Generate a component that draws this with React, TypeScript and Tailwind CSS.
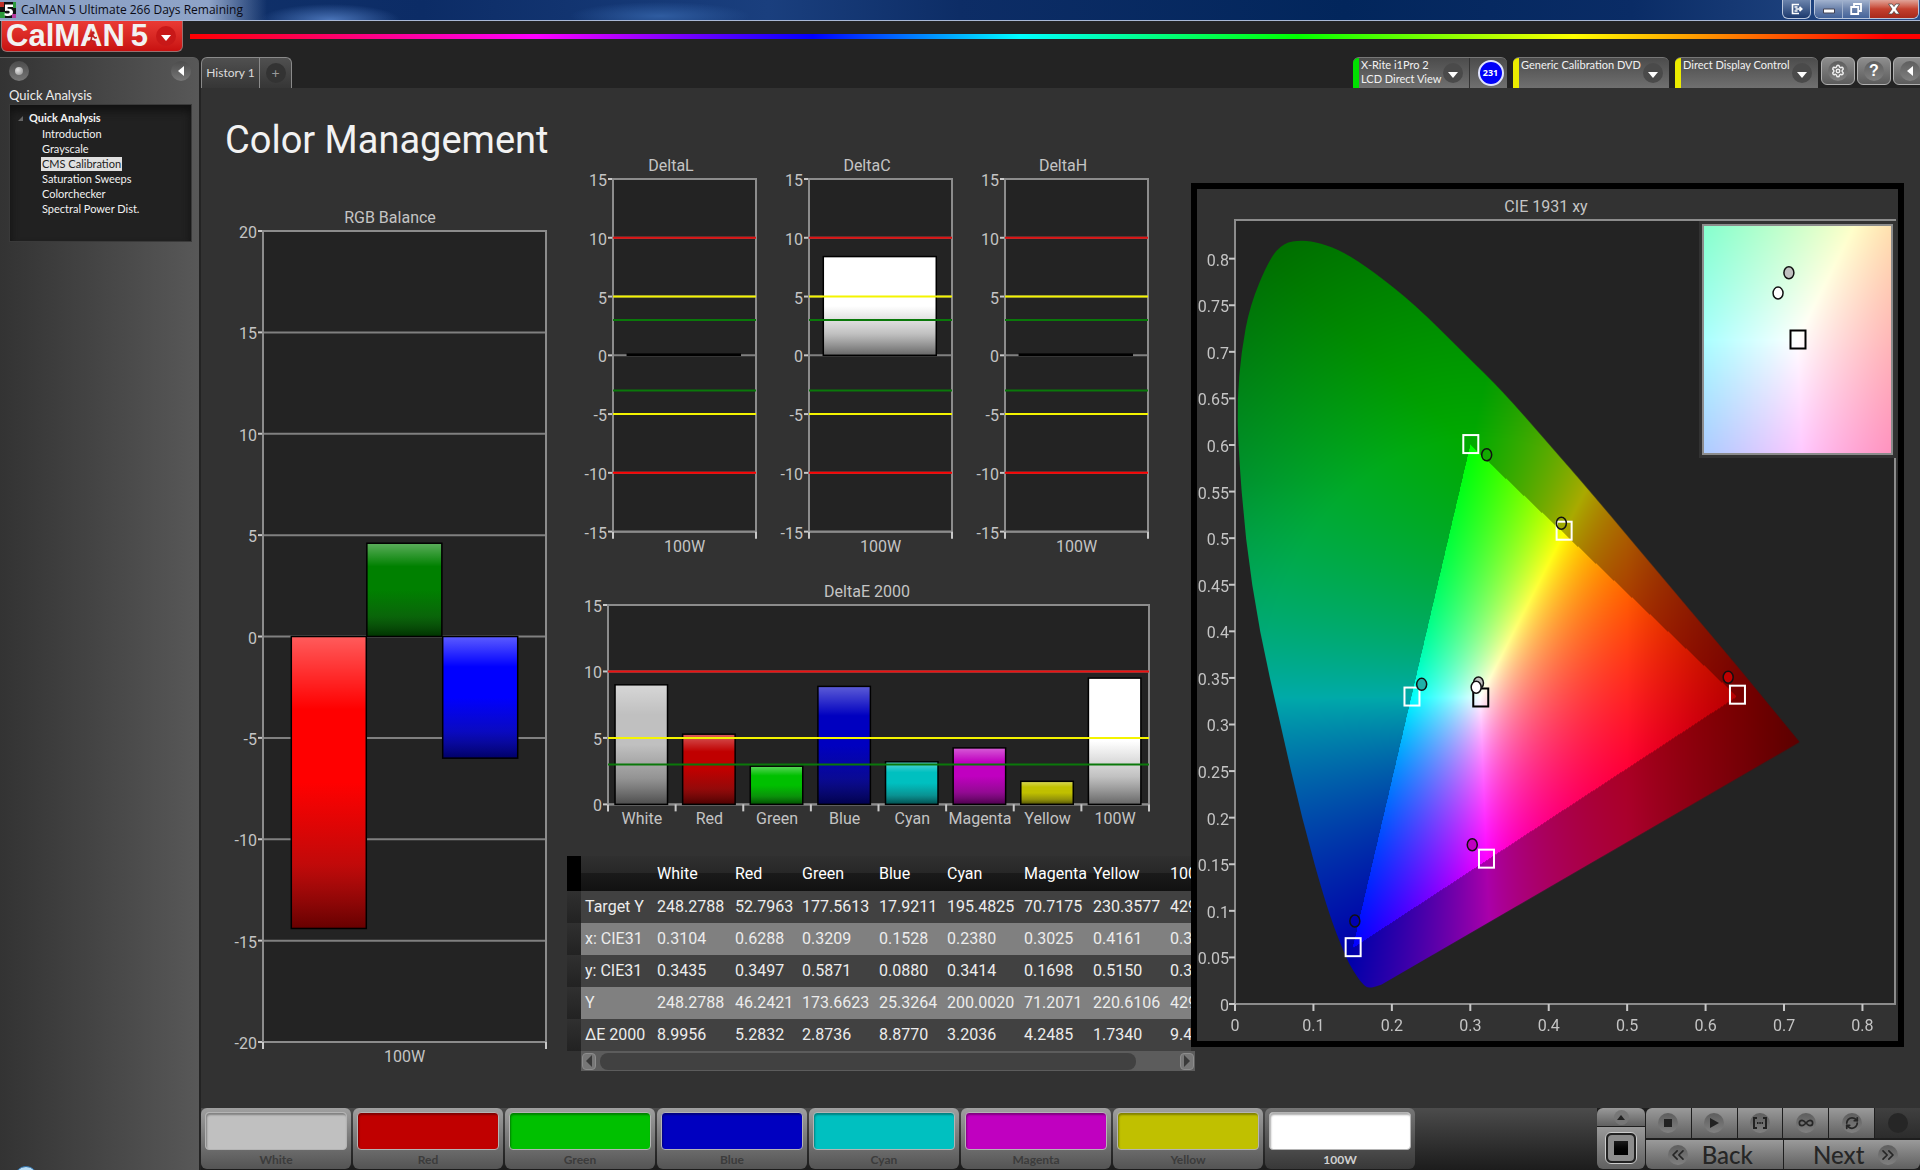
import { useEffect, useRef, type ReactNode } from "react";
import {
  ChevronsLeft,
  ChevronsRight,
  Infinity as InfinityIcon,
  RefreshCw,
  Settings,
} from "lucide-react";

const DATA_FONT = "font-['Roboto',sans-serif]";
const UI = "font-['Lato',sans-serif]";

/* ---------- charts ---------- */

type Bar = { value: number; color: string; x: number; width: number };
type RefLine = { value: number; color: string };

type BarChartProps = {
  title: string;
  min: number;
  max: number;
  step: number;
  bars: Bar[];
  lines: RefLine[];
  labels: string[];
  plotClass: string;
  labelClass: string;
};

function BarChart({ title, min, max, step, bars, lines, labels, plotClass, labelClass }: BarChartProps) {
  const pos = (v: number) => ((max - v) / (max - min)) * 100;
  const ticks: number[] = [];
  for (let v = max; v >= min; v -= step) ticks.push(v);
  const gloss = `gloss-${title.replace(/ /g, "-")}`;
  return (
    <>
      <h2 className="mb-[3px] text-center text-base/5 text-[#c4c4c4]">{title}</h2>
      <svg className={`min-h-0 overflow-visible ${plotClass}`} role="img" aria-label={title}>
        <defs>
          <linearGradient id={gloss} x1="0" y1="0" x2="0" y2="1">
            <stop offset="0" stopColor="#fff" stopOpacity="0.36" />
            <stop offset="0.25" stopColor="#fff" stopOpacity="0" />
            <stop offset="0.5" stopColor="#222" stopOpacity="0" />
            <stop offset="0.78" stopColor="#222" stopOpacity="0.28" />
            <stop offset="1" stopColor="#000" stopOpacity="0.6" />
          </linearGradient>
        </defs>
        <rect width="100%" height="100%" fill="#232323" />
        {ticks.map((v) => (
          <g key={v}>
            <line x1="-5" x2="0" y1={`${pos(v)}%`} y2={`${pos(v)}%`} stroke="#c8c8c8" strokeWidth="2" />
            <line x1="0" x2="100%" y1={`${pos(v)}%`} y2={`${pos(v)}%`} stroke="#808080" strokeWidth="2" />
            <text x="-6" y={`${pos(v)}%`} dy="7" textAnchor="end" fill="#c4c4c4" fontSize="16">
              {v}
            </text>
          </g>
        ))}
        <rect width="100%" height="100%" fill="none" stroke="#8c8c8c" strokeWidth="2" />
        {bars.map((b) => {
          const top = Math.min(pos(b.value), pos(0));
          const height = Math.abs(pos(b.value) - pos(0));
          const box = { x: `${b.x}%`, y: `${top}%`, width: `${b.width}%`, height: `${height}%` };
          return (
            <g key={b.x}>
              <rect {...box} fill={b.color} />
              <rect {...box} fill={`url(#${gloss})`} stroke="#000" strokeWidth="1.5" />
            </g>
          );
        })}
        {lines.map((l) => (
          <line
            key={l.value}
            x1="0"
            x2="100%"
            y1={`${pos(l.value)}%`}
            y2={`${pos(l.value)}%`}
            stroke={l.color}
            strokeWidth="2"
          />
        ))}
        <svg y="100%" overflow="visible">
          {[...labels, ""].map((l, i) => (
            <line
              key={l}
              x1={`${(i * 100) / labels.length}%`}
              x2={`${(i * 100) / labels.length}%`}
              y1="0"
              y2="7"
              stroke="#c8c8c8"
              strokeWidth="2"
            />
          ))}
        </svg>
      </svg>
      <div className={`mt-[5px] flex text-base/5 text-[#c4c4c4] ${labelClass}`}>
        {labels.map((l) => (
          <span key={l} className="w-0 flex-1 text-center whitespace-nowrap">
            {l}
          </span>
        ))}
      </div>
    </>
  );
}

const DELTA_LINES: RefLine[] = [
  { value: 10, color: "#e01010" },
  { value: 5, color: "#f4f400" },
  { value: 3, color: "#0a780a" },
  { value: -3, color: "#0a780a" },
  { value: -5, color: "#f4f400" },
  { value: -10, color: "#ff0000" },
];

const PATCHES = [
  { name: "White", color: "#c0c0c0", swatch: "bg-[#c0c0c0]", deltaE: 8.9956 },
  { name: "Red", color: "#c00000", swatch: "bg-[#c00000]", deltaE: 5.2832 },
  { name: "Green", color: "#00c000", swatch: "bg-[#00c000]", deltaE: 2.8736 },
  { name: "Blue", color: "#0000c0", swatch: "bg-[#0000c0]", deltaE: 8.877 },
  { name: "Cyan", color: "#00c0c0", swatch: "bg-[#00c0c0]", deltaE: 3.2036 },
  { name: "Magenta", color: "#c000c0", swatch: "bg-[#c000c0]", deltaE: 4.2485 },
  { name: "Yellow", color: "#c0c000", swatch: "bg-[#c0c000]", deltaE: 1.734 },
  { name: "100W", color: "#ffffff", swatch: "bg-white", deltaE: 9.5 },
];

/* ---------- chromaticity diagram ---------- */

const LOCUS: [number, number][] = [
  [0.187, 0.021], [0.172, 0.016], [0.163, 0.021], [0.151, 0.035], [0.142, 0.049], [0.118, 0.1],
  [0.085, 0.2], [0.058, 0.3], [0.031, 0.4], [0.013, 0.5], [0.004, 0.6], [0.003, 0.65], [0.008, 0.7],
  [0.019, 0.75], [0.044, 0.8], [0.062, 0.817], [0.085, 0.82], [0.109, 0.817], [0.139, 0.807],
  [0.175, 0.787], [0.228, 0.752], [0.294, 0.697], [0.342, 0.657], [0.393, 0.608], [0.456, 0.547],
  [0.533, 0.47], [0.588, 0.415], [0.641, 0.362], [0.72, 0.281],
];
const PRIMARIES: [number, number][] = [[0.64, 0.33], [0.3, 0.6], [0.15, 0.06]];

function chromaColor(x: number, y: number): [number, number, number] {
  const X = x / y;
  const Z = (1 - x - y) / y;
  const lin = [
    3.2406 * X - 1.5372 - 0.4986 * Z,
    -0.9689 * X + 1.8758 + 0.0415 * Z,
    0.0557 * X - 0.204 + 1.057 * Z,
  ].map((c) => Math.max(0, c));
  const peak = Math.max(...lin);
  return lin.map((c) => (255 * c) / peak) as [number, number, number];
}

function insideGamut(x: number, y: number) {
  return PRIMARIES.every(([ax, ay], i) => {
    const [bx, by] = PRIMARIES[(i + 1) % 3];
    return (bx - ax) * (y - ay) - (by - ay) * (x - ax) >= 0;
  });
}

function falloff(x: number, y: number) {
  const d = Math.hypot(x - 0.3127, y - 0.329);
  const upper = Math.min(1, Math.max(0, (y - 0.36) / 0.2)) * Math.min(1, Math.max(0, (0.5 - x) / 0.15));
  return 1 - 2.1 * Math.max(0, x - 0.5) - 1.3 * upper * Math.max(0, d - 0.28);
}

type Range = { x0: number; x1: number; y0: number; y1: number };

function ChromaField({ range, full }: { range: Range; full: boolean }) {
  const ref = useRef<HTMLCanvasElement>(null);
  useEffect(() => {
    const canvas = ref.current;
    const ctx = canvas?.getContext("2d");
    if (!canvas || !ctx) return;
    const { width: w, height: h } = canvas;
    const image = ctx.createImageData(w, h);
    for (let j = 0; j < h; j++) {
      const y = range.y1 - ((j + 0.5) / h) * (range.y1 - range.y0);
      for (let i = 0; i < w; i++) {
        const x = range.x0 + ((i + 0.5) / w) * (range.x1 - range.x0);
        const k = full ? falloff(x, y) * (insideGamut(x, y) ? 1 : 0.665) : 1;
        const [r, g, b] = chromaColor(x, y);
        image.data.set([r * k, g * k, b * k, 255], (j * w + i) * 4);
      }
    }
    ctx.putImageData(image, 0, 0);
    if (!full) return;
    const pts = LOCUS.map(([x, y]) => [
      ((x - range.x0) / (range.x1 - range.x0)) * w,
      ((range.y1 - y) / (range.y1 - range.y0)) * h,
    ]);
    ctx.globalCompositeOperation = "destination-in";
    ctx.beginPath();
    ctx.moveTo(pts[0][0], pts[0][1]);
    for (let n = 1; n < pts.length - 1; n++) {
      ctx.quadraticCurveTo(
        pts[n][0],
        pts[n][1],
        (pts[n][0] + pts[n + 1][0]) / 2,
        (pts[n][1] + pts[n + 1][1]) / 2,
      );
    }
    ctx.lineTo(pts[pts.length - 1][0], pts[pts.length - 1][1]);
    ctx.closePath();
    ctx.fill();
  }, [range, full]);
  return (
    <canvas
      ref={ref}
      width={full ? 660 : 188}
      height={full ? 785 : 229}
      className="absolute inset-0 h-full w-full"
    />
  );
}

const CIE_RANGE: Range = { x0: 0, x1: 0.8415, y0: 0, y1: 0.8415 };
const INSET_RANGE: Range = { x0: 0.2877, x1: 0.3377, y0: 0.304, y1: 0.354 };

type Mark = { x: number; y: number; color: string };
const TARGETS: Mark[] = [
  { x: 0.3, y: 0.601, color: "#fff" },
  { x: 0.419, y: 0.508, color: "#fff" },
  { x: 0.64, y: 0.332, color: "#fff" },
  { x: 0.225, y: 0.33, color: "#fff" },
  { x: 0.32, y: 0.156, color: "#fff" },
  { x: 0.15, y: 0.061, color: "#fff" },
  { x: 0.3127, y: 0.329, color: "#000" },
];
const MEASURED: Mark[] = [
  { x: 0.3209, y: 0.5885, color: "none" },
  { x: 0.4161, y: 0.515, color: "none" },
  { x: 0.6288, y: 0.3497, color: "#c00000" },
  { x: 0.238, y: 0.342, color: "#20b0a8" },
  { x: 0.3025, y: 0.1698, color: "#c000c0" },
  { x: 0.1528, y: 0.088, color: "#0000b0" },
  { x: 0.3104, y: 0.3435, color: "#c0c0c0" },
  { x: 0.3075, y: 0.339, color: "#fff" },
];

function Marks({ range, targets, measured }: { range: Range; targets: Mark[]; measured: Mark[] }) {
  const px = (x: number) => `${((x - range.x0) / (range.x1 - range.x0)) * 100}%`;
  const py = (y: number) => `${((range.y1 - y) / (range.y1 - range.y0)) * 100}%`;
  return (
    <>
      {targets.map((t) => (
        <svg key={t.x} x={px(t.x)} y={py(t.y)} overflow="visible">
          <rect x="-7" y="-9" width="15" height="18" fill="none" stroke={t.color} strokeWidth="2" />
        </svg>
      ))}
      {measured.map((m) => (
        <svg key={m.x} x={px(m.x)} y={py(m.y)} overflow="visible">
          <ellipse cx="0" cy="-1" rx="5" ry="6" fill={m.color} stroke="#111" strokeWidth="1.5" />
        </svg>
      ))}
    </>
  );
}

function CieChart() {
  const yTicks = Array.from({ length: 17 }, (_, i) => i * 0.05);
  const xTicks = Array.from({ length: 9 }, (_, i) => i * 0.1);
  const label = (v: number) => String(Math.round(v * 100) / 100);
  return (
    <section className="mt-[95px] mb-[61px] flex flex-col border-[6px] border-black pt-2 pr-[3px] pb-[37px] pl-[38px]">
      <h2 className="mb-[3px] -ml-[38px] text-center text-base/5 text-[#c4c4c4]">CIE 1931 xy</h2>
      <div className="relative flex-1 bg-[#232323]">
        <ChromaField range={CIE_RANGE} full />
        <svg className="absolute inset-0 h-full w-full overflow-visible" role="img" aria-label="CIE 1931 xy chromaticity diagram">
          <rect width="100%" height="100%" fill="none" stroke="#8c8c8c" strokeWidth="2" />
          {yTicks.map((v) => (
            <svg key={v} y={`${(1 - v / CIE_RANGE.y1) * 100}%`} overflow="visible">
              <line x1="-6" x2="0" stroke="#c8c8c8" strokeWidth="2" />
              <text x="-6" y="7" textAnchor="end" fill="#c4c4c4" fontSize="16">
                {label(v)}
              </text>
            </svg>
          ))}
          {xTicks.map((v) => (
            <svg key={v} x={`${(v / CIE_RANGE.x1) * 100}%`} y="100%" overflow="visible">
              <line y1="0" y2="7" stroke="#c8c8c8" strokeWidth="2" />
              <text x="0" y="27" textAnchor="middle" fill="#c4c4c4" fontSize="16">
                {label(v)}
              </text>
            </svg>
          ))}
          <Marks range={CIE_RANGE} targets={TARGETS} measured={MEASURED} />
        </svg>
        <div className="absolute top-px -right-[3px] h-[237px] w-[199px] bg-[#323232] p-[3px] pr-[5px]">
          <div className="relative h-full w-full border-2 border-[#8c8c8c]">
            <ChromaField range={INSET_RANGE} full={false} />
            <svg className="absolute inset-0 h-full w-full" aria-hidden="true">
              <Marks range={INSET_RANGE} targets={[TARGETS[6]]} measured={MEASURED.slice(6)} />
            </svg>
          </div>
        </div>
      </div>
    </section>
  );
}

/* ---------- table ---------- */

const HEAD = ["White", "Red", "Green", "Blue", "Cyan", "Magenta", "Yellow", "100W"];
const ROWS: [string, string[]][] = [
  ["Target Y", ["248.2788", "52.7963", "177.5613", "17.9211", "195.4825", "70.7175", "230.3577", "429.6314"]],
  ["x: CIE31", ["0.3104", "0.6288", "0.3209", "0.1528", "0.2380", "0.3025", "0.4161", "0.3077"]],
  ["y: CIE31", ["0.3435", "0.3497", "0.5871", "0.0880", "0.3414", "0.1698", "0.5150", "0.3400"]],
  ["Y", ["248.2788", "46.2421", "173.6623", "25.3264", "200.0020", "71.2071", "220.6106", "429.6314"]],
  ["ΔE 2000", ["8.9956", "5.2832", "2.8736", "8.8770", "3.2036", "4.2485", "1.7340", "9.4821"]],
];

function ResultsTable() {
  return (
    <div className="mt-[27px] ml-[7px]">
      <div className="overflow-hidden">
        <table className="w-[678px] table-fixed text-left text-base/6 text-[#ececec]">
          <colgroup>
            <col className="w-[14px]" />
            <col className="w-[72px]" />
            <col className="w-[78px]" />
            <col className="w-[67px]" />
            <col className="w-[77px]" />
            <col className="w-[68px]" />
            <col className="w-[77px]" />
            <col className="w-[69px]" />
            <col className="w-[77px]" />
            <col className="w-[79px]" />
          </colgroup>
          <thead>
            <tr className="h-[35px] bg-[linear-gradient(#303030_0%,#272727_48%,#1a1a1a_50%,#111_100%)]">
              <td className="bg-black" />
              <td />
              {HEAD.map((h) => (
                <th key={h} scope="col" className="pl-1 font-normal text-white">
                  {h}
                </th>
              ))}
            </tr>
          </thead>
          <tbody>
            {ROWS.map(([name, values]) => (
              <tr key={name} className="h-8 bg-[#414141] even:bg-[#808080]">
                <td className="bg-linear-to-b from-[#303030] to-[#222]" />
                <th scope="row" className="pl-1 font-normal whitespace-nowrap">
                  {name}
                </th>
                {values.map((v, i) => (
                  <td key={i} className="pl-1">
                    {v}
                  </td>
                ))}
              </tr>
            ))}
          </tbody>
        </table>
      </div>
      <div className="-mr-1 ml-[14px] flex h-5 items-center justify-between gap-1 bg-[#5c5c5c] px-px">
        <button type="button" aria-label="Scroll left" className="flex h-[17px] w-[14px] items-center justify-center rounded-sm border border-[#8c8c8c] bg-[#777]">
          <svg viewBox="0 0 6 12" className="h-3 w-1.5"><path d="M6 0v12L0 6z" fill="#3a3a3a" /></svg>
        </button>
        <div className="flex h-full flex-1 items-center pr-10">
          <div className="h-[17px] w-full rounded-lg bg-[#414141]" />
        </div>
        <button type="button" aria-label="Scroll right" className="flex h-[17px] w-[14px] items-center justify-center rounded-sm border border-[#8c8c8c] bg-[#777]">
          <svg viewBox="0 0 6 12" className="h-3 w-1.5"><path d="M0 0v12l6-6z" fill="#3a3a3a" /></svg>
        </button>
      </div>
    </div>
  );
}

/* ---------- window frame ---------- */

function TitleBar() {
  return (
    <div className="flex h-[21px] items-start border-b border-[#a9b8d4] bg-[radial-gradient(ellipse_70px_16px_at_330px_20px,#4a74b8,transparent),radial-gradient(ellipse_90px_14px_at_660px_16px,#2f5ca0,transparent),linear-gradient(90deg,#14356c_0%,#0c2c66_22%,#1a3f7e_40%,#0d2d66_50%,#02265c_70%,#0a2c66_85%,#2a4f8c_100%)]">
      <div className="flex h-5 items-center bg-[linear-gradient(90deg,#8ba0c4_0%,#8fa4c8_78%,transparent_100%)] pr-6">
        <svg viewBox="0 0 16 16" className="h-4 w-4" aria-hidden="true">
          <rect width="16" height="16" fill="#111" />
          <path d="M0 0h4v5H0z" fill="#c03028" />
          <path d="M0 10h5v6H0zM13 0h3v6h-3z" fill="#2c9a3c" />
          <path d="M12 12h4v4h-4z" fill="#b83aa0" />
          <path d="M5 2.5h8v2.6H7.600v1.700c3.600-.5 5.600 1 5.400 3.700-.2 2.600-2.600 3.800-6 3.500-1-.1-1.800-.3-2.600-.7l.4-2.300c2 .7 4.700.9 4.900-.7.1-1.600-1.900-1.700-4.700-1.300z" fill="#fff" />
        </svg>
        <span className="ml-[5px] font-['Open_Sans',sans-serif] text-xs/5 text-[#0a0a14]">CalMAN 5 Ultimate 266 Days Remaining</span>
      </div>
      <div className="mr-[1px] ml-auto flex gap-[3px]">
        <button type="button" aria-label="Move window" className="flex h-[19px] w-[29px] items-center justify-center rounded-b-md border border-t-0 border-[#b9c6dc] bg-linear-to-b from-[#6c84ac] to-[#1d3a6e]">
          <svg viewBox="0 0 12 12" className="h-3 w-3" fill="none" stroke="#fff" strokeWidth="1.6"><path d="M8 1.500H1.500v9H8M4.500 6h6M8.500 3.800 10.800 6 8.500 8.200M3.500 4h3M3.500 8h3" /></svg>
        </button>
        <div className="flex overflow-hidden rounded-b-md border border-t-0 border-[#b9c6dc]">
          <button type="button" aria-label="Minimize" className="flex h-[18px] w-7 items-center justify-center border-r border-[#9fb0cc] bg-linear-to-b from-[#a3b3cf] via-[#6b82ab] to-[#44639a]">
            <svg viewBox="0 0 12 12" className="h-3 w-3"><path d="M.5 6h11v4H.5z" fill="#fff" stroke="#445" /></svg>
          </button>
          <button type="button" aria-label="Restore" className="flex h-[18px] w-[27px] items-center justify-center border-r border-[#9fb0cc] bg-linear-to-b from-[#a3b3cf] via-[#6b82ab] to-[#44639a]">
            <svg viewBox="0 0 12 12" className="h-3 w-3" fill="none" stroke="#fff" strokeWidth="1.8"><path d="M4 3V1h7v7H9M1.200 4h7v7h-7z" /></svg>
          </button>
          <button type="button" aria-label="Close" className="flex h-[18px] w-12 items-center justify-center bg-linear-to-b from-[#e0a398] via-[#c4402e] to-[#a82a1c]">
            <svg viewBox="0 0 12 12" className="h-3 w-3"><path d="M.5 1h3.700L6 3.600 7.800 1h3.700L8 6l3.500 5H7.800L6 8.400 4.200 11H.5L4 6z" fill="#fff" stroke="#444" strokeWidth=".7" /></svg>
          </button>
        </div>
      </div>
    </div>
  );
}

function Caret({ className }: { className: string }) {
  return (
    <span className={`flex h-5 w-5 items-center justify-center rounded-full ${className}`}>
      <svg viewBox="0 0 10 6" className="mt-1 h-1.5 w-2.5"><path d="M0 0h10L5 6z" fill="#fff" /></svg>
    </span>
  );
}

function Logo() {
  return (
    <button type="button" aria-label="CalMAN 5 menu" className="ml-px flex h-[31px] w-[182px] items-center rounded-b-md border border-t-0 border-[#9a7070] bg-linear-to-b from-[#ea3a34] to-[#c81010] pl-1">
      <span className="relative font-['Liberation_Sans',sans-serif] text-[31px]/7 font-bold text-[#f2f2f2]">
        CalMAN
        <svg viewBox="0 0 12 15" className="absolute right-[27px] bottom-1 h-[15px] w-3" aria-hidden="true">
          <circle cx="7" cy="2" r="1.700" fill="#c02020" />
          <path d="M2 5.500 6 4l3 3 2-.5M6 4.500 5 9l3.500 2L8 14M5 9 3 12l-2.500.5" fill="none" stroke="#c02020" strokeWidth="1.600" />
        </svg>
      </span>
      <span className="ml-1.5 font-['Liberation_Sans',sans-serif] text-[31px]/7 font-bold text-[#f2f2f2]">5</span>
      <Caret className="ml-2 bg-[#c81818]" />
    </button>
  );
}

type SourceProps = { lines: string[]; strip: string; className: string; children?: ReactNode };

function SourceTab({ lines, strip, className, children }: SourceProps) {
  return (
    <div className={`flex h-[31px] overflow-hidden rounded-t-md border-t border-[#777] bg-linear-to-b from-[#4c4c4c] to-[#707070] ${className}`}>
      <button type="button" className="flex flex-1 text-left">
        <span className={`h-full w-1.5 ${strip}`} />
        <span className="flex-1 pl-0.5 text-[11px]/[14px] whitespace-nowrap text-[#f2f2f2]">
          {lines.map((l) => (
            <span key={l} className="block">{l}</span>
          ))}
        </span>
        <Caret className="mt-[5px] mr-1.5 bg-[#4a4a4a]" />
      </button>
      {children}
    </div>
  );
}

const SQUARE_BTN =
  "flex h-7 w-[34px] shrink-0 items-center justify-center rounded-md border border-[#b0b0b0] bg-linear-to-b from-[#8e8e8e] to-[#5c5c5c]";
const ROUND = "flex h-5 w-5 items-center justify-center rounded-full bg-linear-to-b from-[#5e5e5e] to-[#808080]";

function TopTabs() {
  return (
    <div className="flex h-[31px] items-start">
      <div className="flex h-[31px] overflow-hidden rounded-t-md border border-b-0 border-[#8a8a8a] bg-linear-to-b from-[#505050] to-[#363636]">
        <button type="button" className="w-[57px] text-xs whitespace-nowrap text-[#dcdcdc]">History 1</button>
        <button type="button" aria-label="Add history tab" className="flex w-8 items-center justify-center border-l border-[#8a8a8a]">
          <span className="flex h-5 w-5 items-center justify-center rounded-full bg-[#333] text-sm/5 text-[#999]">+</span>
        </button>
      </div>
      <div className="ml-auto flex">
        <SourceTab lines={["X-Rite i1Pro 2", "LCD Direct View"]} strip="bg-[#00e000]" className="w-[154px]">
          <div className="flex w-[38px] items-center justify-center border-l border-[#333] pl-1">
            <span className="flex h-[26px] w-[26px] items-center justify-center rounded-full border-2 border-[#dfe3ff] bg-[#0000f8] font-['Open_Sans',sans-serif] text-[9px] font-bold text-white">231</span>
          </div>
        </SourceTab>
        <SourceTab lines={["Generic Calibration DVD"]} strip="bg-[#ecec00]" className="ml-1.5 w-[156px]" />
        <SourceTab lines={["Direct Display Control"]} strip="bg-[#ecec00]" className="ml-1.5 w-[143px]" />
        <div className="-mr-[7px] ml-[3px] flex gap-0.5">
          <button type="button" aria-label="Settings" className={SQUARE_BTN}>
            <span className={ROUND}><Settings className="h-3.5 w-3.5 text-[#eee]" strokeWidth={2.5} /></span>
          </button>
          <button type="button" aria-label="Help" className={SQUARE_BTN}>
            <span className={`${ROUND} font-['Liberation_Sans',sans-serif] text-base/5 font-bold text-white`}>?</span>
          </button>
          <button type="button" aria-label="Collapse" className={SQUARE_BTN}>
            <span className={ROUND}><svg viewBox="0 0 6 10" className="h-2.5 w-1.5"><path d="M6 0v10L0 5z" fill="#fff" /></svg></span>
          </button>
        </div>
      </div>
    </div>
  );
}

const PAGES = ["Introduction", "Grayscale", "CMS Calibration", "Saturation Sweeps", "Colorchecker", "Spectral Power Dist."];

function Sidebar() {
  return (
    <aside className="relative w-[199px] shrink-0 overflow-hidden rounded-tr-md border-t border-[#606060] bg-linear-to-r from-[#333] to-[#585858] px-[9px] pt-[3px]">
      <div className="-mr-px flex justify-between">
        <button type="button" aria-label="Record" className="flex h-5 w-5 items-center justify-center rounded-full bg-linear-to-b from-[#4c4c4c] to-[#777]">
          <span className="h-2 w-2 rounded-full bg-[radial-gradient(circle_at_35%_35%,#e4e4e4,#8a8a8a)]" />
        </button>
        <button type="button" aria-label="Collapse sidebar" className="flex h-5 w-5 items-center justify-center rounded-full bg-linear-to-b from-[#4c4c4c] to-[#777]">
          <svg viewBox="0 0 6 10" className="h-2.5 w-1.5"><path d="M6 0v10L0 5z" fill="#fff" /></svg>
        </button>
      </div>
      <h2 className="mt-[5px] text-[13px]/[18px] text-[#ececec]">Quick Analysis</h2>
      <nav className="-mr-0.5 h-[138px] border border-[#3a3a3a] bg-[#212121] pt-1.5 pl-2 text-[11px] text-[#f2f2f2] shadow-[inset_0_6px_8px_#111]">
        <div className="flex items-center leading-[14px] font-bold">
          <svg viewBox="0 0 5 5" className="mr-1.5 h-[5px] w-[5px]"><path d="M5 0v5H0z" fill="#666" /></svg>
          Quick Analysis
        </div>
        <ul className="mt-0.5 ml-[23px]">
          {PAGES.map((p) => (
            <li key={p} className="mb-px leading-[14px]">
              <a href="#" className={p === "CMS Calibration" ? "inline-block bg-[#e0e0e0] px-px text-[#222]" : "px-px"}>{p}</a>
            </li>
          ))}
        </ul>
      </nav>
      <span className="absolute -bottom-5 left-3.5 h-6 w-6 rounded-full border border-[#2c6ea8] bg-[#b8dcf4]" />
    </aside>
  );
}

/* ---------- bottom bar ---------- */

const CTRL = "flex items-center justify-center bg-linear-to-b from-[#9a9a9a] to-[#606060] text-[#262626]";

function BottomBar() {
  return (
    <footer className="flex h-[62px] items-stretch bg-linear-to-b from-[#4c4c4c] to-[#1c1c1c] pb-px">
      <div className="flex gap-0.5">
        {PATCHES.map((p) => {
          const active = p.name === "100W";
          return (
            <button
              key={p.name}
              type="button"
              className={`flex w-[150px] flex-col items-stretch rounded-md px-1 pt-1 ${
                active ? "bg-linear-to-b from-[#767676] to-[#383838]" : "bg-linear-to-b from-[#a0a0a0] to-[#545454]"
              }`}
            >
              <span className={`h-[38px] rounded-sm border border-[#b4b4b4] shadow-[inset_1px_2px_2px_#0005] ${p.swatch}`} />
              <span className={`pt-px text-center text-xs/[18px] font-bold ${active ? "text-[#d0d0d0]" : "text-[#3c3c3c]"}`}>{p.name}</span>
            </button>
          );
        })}
      </div>
      <div className="ml-auto flex gap-px bg-[#1e1e1e]">
        <div className="flex w-12 flex-col gap-px">
          <button type="button" aria-label="Expand" className={`h-[18px] rounded-t-md ${CTRL}`}>
            <span className="flex h-[15px] w-[15px] items-center justify-center rounded-full bg-[#777]">
              <svg viewBox="0 0 8 5" className="h-[5px] w-2"><path d="M0 5 4 0l4 5z" fill="#222" /></svg>
            </span>
          </button>
          <button type="button" aria-label="Pattern" className={`flex-1 rounded-b-md ${CTRL}`}>
            <span className="flex h-8 w-8 items-center justify-center rounded-md border border-[#ccc] bg-[#222] p-0.5">
              <span className="flex h-full w-full items-center justify-center rounded-sm bg-[#8c8c8c]">
                <span className="h-3.5 w-3.5 bg-linear-to-b from-[#1c1c1c] to-black" />
              </span>
            </span>
          </button>
        </div>
        <div className="flex w-[274px] flex-col gap-0.5">
          <div className="grid h-[30px] grid-cols-6 gap-px">
            <button type="button" aria-label="Stop" className={`rounded-tl-md ${CTRL}`}><span className={ROUND}><span className="h-2 w-2 bg-[#222]" /></span></button>
            <button type="button" aria-label="Play" className={CTRL}><span className={ROUND}><svg viewBox="0 0 9 10" className="h-2.5 w-[9px]"><path d="M0 0v10l9-5z" fill="#222" /></svg></span></button>
            <button type="button" aria-label="Read range" className={CTRL}><span className={ROUND}><svg viewBox="0 0 14 12" className="h-3 w-3.5" fill="none" stroke="#222" strokeWidth="2"><path d="M4 1H1v10h3M10 1h3v10h-3M4 6h1.500M6.300 6h1.500M8.600 6H10" /></svg></span></button>
            <button type="button" aria-label="Continuous" className={CTRL}><span className={ROUND}><InfinityIcon className="h-4 w-4" strokeWidth={2.500} /></span></button>
            <button type="button" aria-label="Refresh" className={CTRL}><span className={ROUND}><RefreshCw className="h-3.5 w-3.5" strokeWidth={3} /></span></button>
            <div className="flex items-center justify-center bg-linear-to-b from-[#404040] to-[#2c2c2c]"><span className="h-5 w-5 rounded-full bg-[#262626]" /></div>
          </div>
          <div className="grid flex-1 grid-cols-2 gap-px text-2xl/6 font-medium">
            <button type="button" className={`gap-3.5 rounded-bl-md pr-2 ${CTRL}`}><span className={ROUND}><ChevronsLeft className="h-5 w-5" /></span>Back</button>
            <button type="button" className={`gap-3.5 rounded-br-md pl-2 ${CTRL}`}>Next<span className={ROUND}><ChevronsRight className="h-5 w-5" /></span></button>
          </div>
        </div>
      </div>
    </footer>
  );
}

/* ---------- page ---------- */

export default function App() {
  return (
    <div className={`flex min-h-screen flex-col overflow-hidden bg-[#232323] ${UI}`}>
      <TitleBar />
      <header className="flex h-9 items-start">
        <Logo />
        <div className="mt-[13px] ml-[7px] h-[5px] flex-1 bg-[linear-gradient(90deg,#f00_0%,#f0f_20%,#00f_36%,#0ff_48%,#0f0_64%,#ff0_80%,#f00_98%)]" />
      </header>
      <div className="flex flex-1 gap-0.5">
        <Sidebar />
        <div className="flex min-w-0 flex-1 flex-col">
          <TopTabs />
          <main className={`grid flex-1 grid-cols-[359fr_631fr_713fr] bg-[#323232] pr-4 ${DATA_FONT}`}>
            <section className="flex min-w-0 flex-col pr-[5px] pb-[41px] pl-6">
              <h1 className="mt-7 mb-11 text-[38px]/[48px] whitespace-nowrap text-[#f2f2f2]">Color Management</h1>
              <BarChart
                title="RGB Balance"
                min={-20}
                max={20}
                step={5}
                bars={[
                  { value: -14.4, color: "#ff0000", x: 10, width: 26.5 },
                  { value: 4.6, color: "#008000", x: 36.7, width: 26.5 },
                  { value: -6, color: "#0000ff", x: 63.5, width: 26.5 },
                ]}
                lines={[]}
                labels={["100W"]}
                plotClass="ml-[38px] mr-[9px] flex-1"
                labelClass="ml-[38px] mr-[9px]"
              />
            </section>
            <section className="flex min-w-0 flex-col pt-[68px] pb-[37px]">
              <div className="mr-[30px] ml-[13px] grid flex-[400_1_0] grid-cols-3">
                {["DeltaL", "DeltaC", "DeltaH"].map((t) => (
                  <div key={t} className="flex min-w-0 flex-col">
                    <BarChart
                      title={t}
                      min={-15}
                      max={15}
                      step={5}
                      bars={[{ value: t === "DeltaC" ? 8.4 : 0.1, color: t === "DeltaC" ? "#ffffff" : "#111111", x: 10, width: 79 }]}
                      lines={DELTA_LINES}
                      labels={["100W"]}
                      plotClass="ml-10 mr-[13px] flex-1"
                      labelClass="ml-10 mr-[13px]"
                    />
                  </div>
                ))}
              </div>
              <div className="mt-[25px] mr-[30px] ml-[13px] flex flex-[247_1_0] flex-col">
                <BarChart
                  title="DeltaE 2000"
                  min={0}
                  max={15}
                  step={5}
                  bars={PATCHES.map((p, i) => ({ value: p.deltaE, color: p.color, x: i * 12.5 + 1.3, width: 9.7 }))}
                  lines={[
                    { value: 10, color: "#ee1010" },
                    { value: 5, color: "#f4f400" },
                    { value: 3, color: "#0a780a" },
                  ]}
                  labels={HEAD}
                  plotClass="ml-[35px] mr-3 flex-1"
                  labelClass="ml-[35px] mr-3"
                />
              </div>
              <ResultsTable />
            </section>
            <CieChart />
          </main>
          <BottomBar />
        </div>
      </div>
    </div>
  );
}
